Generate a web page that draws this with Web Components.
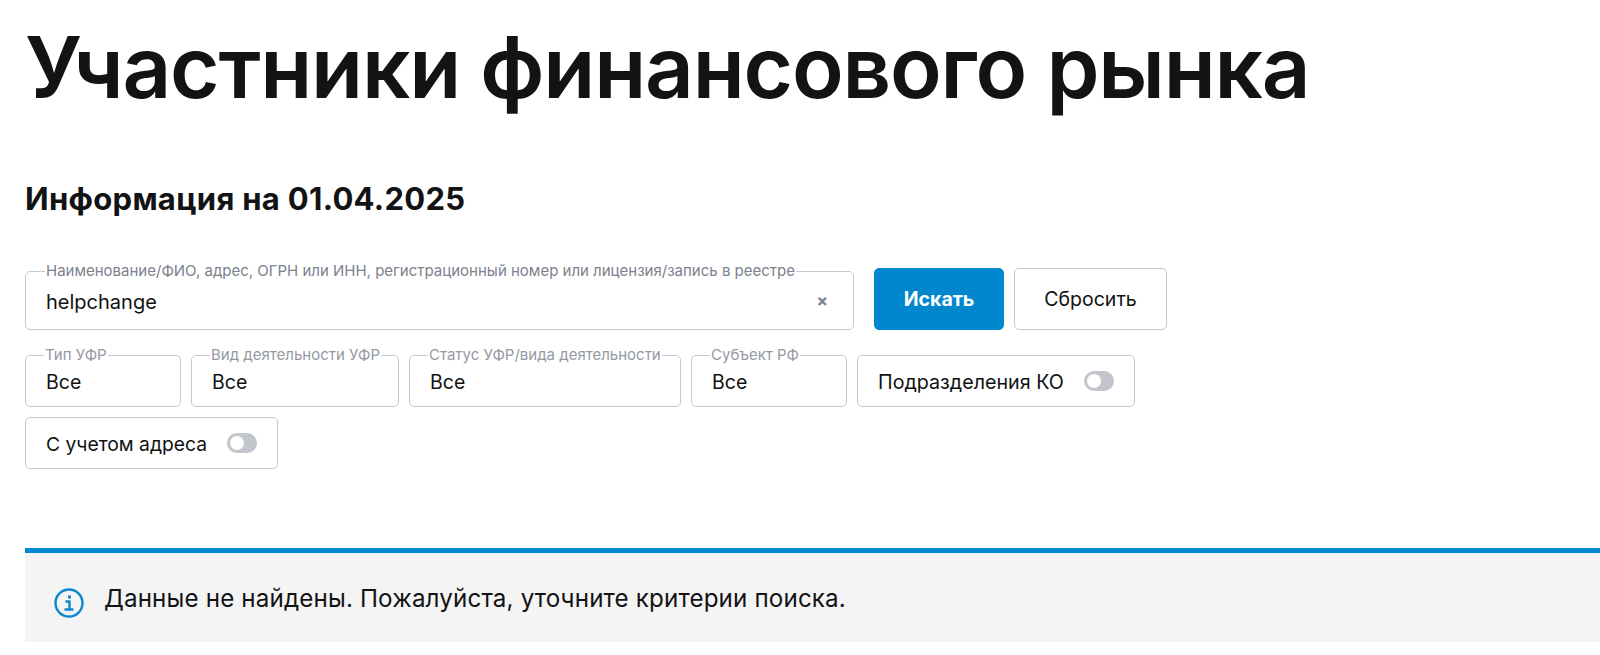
<!DOCTYPE html>
<html lang="ru">
<head>
<meta charset="utf-8">
<title>Участники финансового рынка</title>
<style>
    html, body { margin: 0; background: #fff; }
    body { font-family: Inter, "Noto Sans", sans-serif; color: #111; height: 655px; overflow: hidden; }
</style>
</head>
<body>
<market-page>
    <page-heading>Участники финансового рынка</page-heading>
    <info-date>Информация на 01.04.2025</info-date>
    <search-form></search-form>
    <info-alert>Данные не найдены. Пожалуйста, уточните критерии поиска.</info-alert>
</market-page>
<script>
class MarketPage extends HTMLElement {
    constructor() {
        super();
        this.attachShadow({ mode: 'open' });
        this.shadowRoot.innerHTML = `
            <style>
                :host { display: block; padding: 18px 0 0 25px; }
            </style>
            <slot></slot>
        `;
    }
}

class PageHeading extends HTMLElement {
    constructor() {
        super();
        this.attachShadow({ mode: 'open' });
        this.shadowRoot.innerHTML = `
            <style>
                :host { display: block; }
                h1 {
                    margin: 0;
                    font: 600 85px/100px Inter, sans-serif;
                    letter-spacing: -1.17px;
                    color: #121314;
                    white-space: nowrap;
                }
            </style>
            <h1><slot></slot></h1>
        `;
    }
}

class InfoDate extends HTMLElement {
    constructor() {
        super();
        this.attachShadow({ mode: 'open' });
        this.shadowRoot.innerHTML = `
            <style>
                :host { display: block; margin-top: 63px; }
                h2 { margin: 0; font: 700 31px/36px Inter, sans-serif; letter-spacing: 0.3px; color: #121314; }
            </style>
            <h2><slot></slot></h2>
        `;
    }
}

class UiField extends HTMLElement {
    constructor() {
        super();
        this.attachShadow({ mode: 'open' });
        const label = this.getAttribute('label');
        this.shadowRoot.innerHTML = `
            <style>
                :host { display: block; }
                fieldset {
                    box-sizing: border-box;
                    height: 100%;
                    min-width: 0;
                    margin: 0;
                    padding: 0 20px 4px;
                    border: 1px solid #c6c8cd;
                    border-radius: 5px;
                    display: flex;
                    align-items: center;
                    justify-content: space-between;
                }
                legend {
                    padding: 0 1px;
                    margin-left: var(--legend-shift, -1px);
                    font-size: 15px;
                    line-height: 14px;
                    color: var(--legend-color, #7c818d);
                    white-space: nowrap;
                }
                .value { font-size: var(--value-size, 19.5px); line-height: 24px; color: #111; }
                ::slotted([slot="end"]) { margin-right: 5px; }
            </style>
            <fieldset>
                <legend>${label}</legend>
                <span class="value"><slot></slot></span>
                <slot name="end"></slot>
            </fieldset>
        `;
    }
}

class UiToggle extends HTMLElement {
    constructor() {
        super();
        this.attachShadow({ mode: 'open' });
        this.shadowRoot.innerHTML = `
            <style>
                :host {
                    box-sizing: border-box;
                    display: flex;
                    align-items: center;
                    gap: 20px;
                    height: 52px;
                    padding: 0 20px;
                    border: 1px solid #c6c8cd;
                    border-radius: 5px;
                    font-size: 19.7px;
                    color: #111;
                    white-space: nowrap;
                }
                .label { margin-top: 2px; }
                .track {
                    flex: none;
                    width: 30px;
                    height: 20px;
                    border-radius: 10px;
                    background: #c2c5cb;
                    position: relative;
                }
                .knob {
                    position: absolute;
                    left: 3px;
                    top: 3px;
                    width: 14px;
                    height: 14px;
                    border-radius: 50%;
                    background: #fff;
                }
            </style>
            <span class="label"><slot></slot></span>
            <span class="track"><span class="knob"></span></span>
        `;
    }
}

class UiButton extends HTMLElement {
    constructor() {
        super();
        this.attachShadow({ mode: 'open' });
        this.shadowRoot.innerHTML = `
            <style>
                :host {
                    box-sizing: border-box;
                    display: flex;
                    align-items: center;
                    justify-content: center;
                    height: 62px;
                    border: 1px solid #c6c8cd;
                    border-radius: 5px;
                    font-size: 19.5px;
                    color: #111;
                }
                :host([primary]) {
                    background: #0087cd;
                    border-color: #0087cd;
                    color: #fff;
                    font-weight: 700;
                }
            </style>
            <slot></slot>
        `;
    }
}

class SearchForm extends HTMLElement {
    constructor() {
        super();
        this.attachShadow({ mode: 'open' });
        this.shadowRoot.innerHTML = `
            <style>
                :host { display: block; margin-top: 47px; }
                .row { display: flex; gap: 10px; }
                .first { align-items: flex-end; margin-bottom: 18px; }
                .filters { margin-bottom: 10px; --legend-shift: -2px; --legend-color: #9599a3; }
                .search { width: 829px; height: 66px; margin-right: 10px; --value-size: 20px; }
                .filters ui-field { height: 59px; }
                .filters ui-toggle { align-self: flex-end; }
                .clear { color: #7c818d; font-size: 17px; font-weight: 700; line-height: 1; }
            </style>
            <div class="row first">
                <ui-field class="search" label="Наименование/ФИО, адрес, ОГРН или ИНН, регистрационный номер или лицензия/запись в реестре">
                    helpchange
                    <span class="clear" slot="end">×</span>
                </ui-field>
                <ui-button primary style="width:130px">Искать</ui-button>
                <ui-button style="width:153px">Сбросить</ui-button>
            </div>
            <div class="row filters">
                <ui-field style="width:156px" label="Тип УФР">Все</ui-field>
                <ui-field style="width:208px" label="Вид деятельности УФР">Все</ui-field>
                <ui-field style="width:272px" label="Статус УФР/вида деятельности">Все</ui-field>
                <ui-field style="width:156px" label="Субъект РФ">Все</ui-field>
                <ui-toggle style="width:278px">Подразделения КО</ui-toggle>
            </div>
            <div class="row">
                <ui-toggle style="width:253px; font-size:19.3px">С учетом адреса</ui-toggle>
            </div>
        `;
    }
}

class InfoAlert extends HTMLElement {
    constructor() {
        super();
        this.attachShadow({ mode: 'open' });
        this.shadowRoot.innerHTML = `
            <style>
                :host {
                    display: flex;
                    align-items: center;
                    gap: 20px;
                    box-sizing: border-box;
                    height: 94px;
                    margin-top: 79px;
                    padding: 0 0 0 29px;
                    border-top: 5px solid #0087cd;
                    background: #f4f4f4;
                    font-size: 24.2px;
                    letter-spacing: 0.14px;
                    color: #121314;
                }
                svg { display: block; width: 30px; height: 30px; flex: none; margin-top: 10px; }
                .text { margin-top: 2px; }
            </style>
            <svg viewBox="0 0 30 30" fill="none" stroke="#0f87cf">
                <circle cx="15" cy="15" r="13.5" stroke-width="2.4"/>
                <path d="M11.5 13.5h4v7.5M10.5 21.5h9" stroke-width="2.4"/>
                <path d="M15.5 7.5v3" stroke-width="3"/>
            </svg>
            <span class="text"><slot></slot></span>
        `;
    }
}

customElements.define('market-page', MarketPage);
customElements.define('page-heading', PageHeading);
customElements.define('info-date', InfoDate);
customElements.define('ui-field', UiField);
customElements.define('ui-toggle', UiToggle);
customElements.define('ui-button', UiButton);
customElements.define('search-form', SearchForm);
customElements.define('info-alert', InfoAlert);
</script>
</body>
</html>
